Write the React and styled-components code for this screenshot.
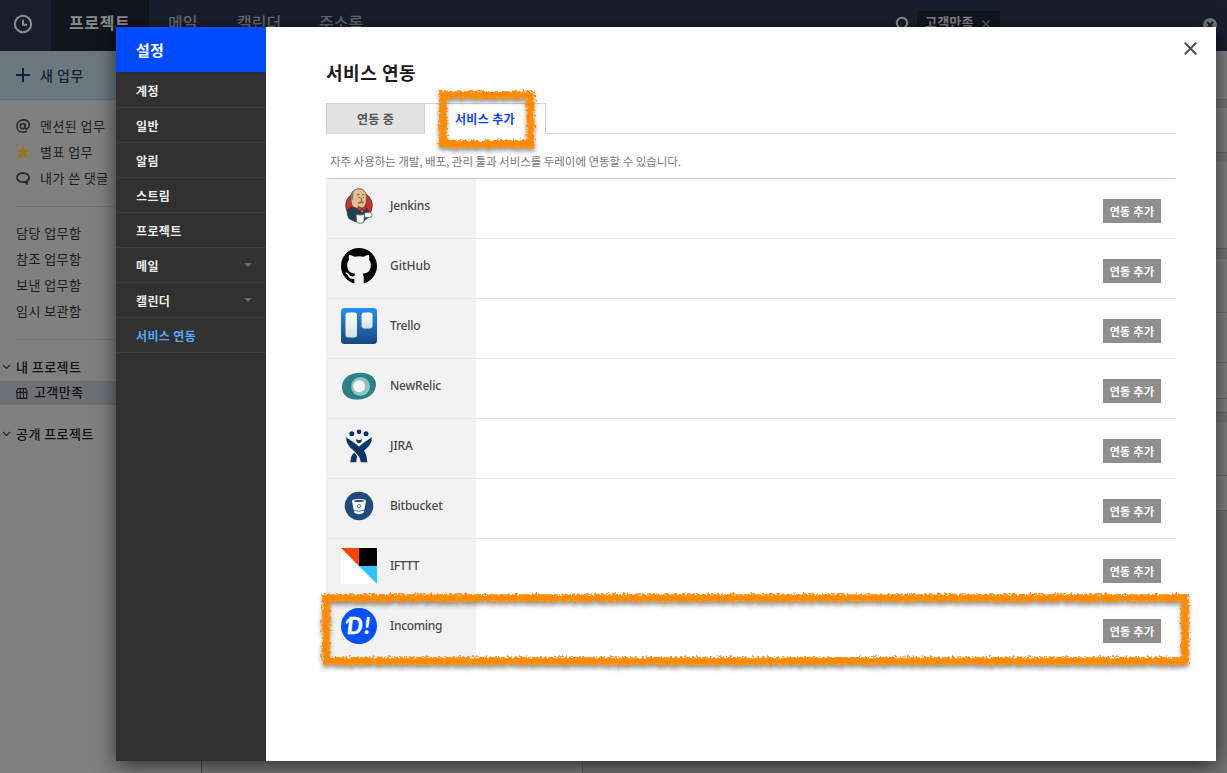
import React from "react";
import styled, { createGlobalStyle, css } from "styled-components";

const Global = createGlobalStyle`
  * { box-sizing: border-box; }
  html, body { margin: 0; padding: 0; }
  body {
    width: 1227px; height: 773px; overflow: hidden; background: #808080;
    font-family: "Noto Sans", "Noto Sans CJK KR", sans-serif;
    font-size: 13px; line-height: 1;
  }
  button { font-family: inherit; }
  svg { display: block; flex: none; }
`;

const kr = css`font-family: "Noto Sans CJK KR", sans-serif;`;

const Page = styled.div`
  position: relative; width: 1227px; height: 773px; overflow: hidden;
  display: flex; flex-direction: column; ${kr}
`;
const TopBar = styled.header`
  height: 51px; flex: none; display: flex; background: #181f2c; color: #6b6e74;
`;
const HistoryButton = styled.div`
  width: 51px; height: 51px; display: flex; align-items: center; padding: 0 0 4px 13px;
  color: #8d8d8d; background: #181f2c;
`;
const NavTab = styled.div`
  height: 51px; padding-top: 14px; line-height: 16px; font-size: 16px;
  font-weight: ${(p) => (p.$active ? 700 : 500)};
  letter-spacing: ${(p) => (p.$active ? "0.6px" : "0")};
  color: ${(p) => (p.$active ? "#8b8b8b" : "#65686e")};
  background: ${(p) => (p.$active ? "#11151e" : "transparent")};
  width: ${(p) => p.$w}px; padding-left: ${(p) => p.$pad}px;
`;
const SearchArea = styled.div`
  flex: 1; display: flex; align-items: flex-start; padding: 11px 10px 0 0;
`;
const SearchIcon = styled.div`margin: 5px 8px 0 500px; color: #8d8d8d;`;
const SearchTag = styled.div`
  width: 83px; height: 30px; background: #11151e; color: #818181; padding: 4px 0 0 8px;
  display: flex; gap: 8px; font-size: 13px; line-height: 14px; font-weight: 700;
  letter-spacing: 0.2px;
  svg { margin-top: 5px; color: #5c5f65; }
`;
const ClearIcon = styled.div`margin: 7px 0 0 auto; color: #777;`;

const Body = styled.div`flex: 1; display: flex; min-height: 0;`;
const Side = styled.aside`
  width: 202px; flex: none; background: #808080; border-right: 1px solid #4d4d4d; color: #1c1c1c;
`;
const NewTask = styled.div`
  height: 49px; background: #6c787f; border-bottom: 1px solid #5f6f7a; color: #172235;
  display: flex; align-items: center; gap: 10px; padding: 0 0 0 16px;
  font-size: 14px; font-weight: 500; letter-spacing: 0.5px;
`;
const SideGroup = styled.div`
  margin: 0 0 0 16px; padding: 13px 0 15px;
  border-bottom: 1px solid #727272;
`;
const SideLink = styled.div`
  height: 26px; display: flex; align-items: center; gap: 10px; padding-bottom: 1px;
  font-size: 13px; letter-spacing: 0.45px;
`;
const ProjectHead = styled.div`
  height: 26px; display: flex; align-items: center; gap: 5px; padding-left: 2px;
  font-size: 13px; font-weight: 500; letter-spacing: 0.45px; color: #111;
  margin-top: ${(p) => p.$mt}px;
  svg { margin-top: 2px; }
`;
const ProjectItem = styled.div`
  height: 24px; margin-top: 2px; background: #6e7076; display: flex; align-items: center; gap: 6px;
  padding: 0 0 3px 16px; font-size: 13px; font-weight: 500; letter-spacing: 0.4px; color: #111;
  svg { margin-top: 3px; }
`;
const ListPane = styled.div`width: 381px; flex: none; background: #7b7b7b; border-right: 1px solid #626262;`;
const DetailPane = styled.div`flex: 1; background: #737373; display: flex; flex-direction: column;`;
const Card = styled.div`
  height: ${(p) => p.$h}px; margin-bottom: ${(p) => p.$gap || 0}px; background: #808080;
  border-bottom: 1px solid #6a6a6a; flex: none;
`;

const Modal = styled.section`
  position: absolute; left: 116px; top: 27px; width: 1100px; height: 734px;
  display: flex; background: #fff; box-shadow: 0 5px 20px rgba(0, 0, 0, 0.62);
`;
const Menu = styled.nav`width: 150px; flex: none; background: #313131;`;
const MenuTitle = styled.h1`
  margin: 0; height: 46px; padding: 0 0 0 20px; background: #004bff; color: #fff;
  border-bottom: 1px solid #232d4a; display: flex; align-items: center;
  font-size: 15px; font-weight: 700; letter-spacing: 0.3px;
`;
const MenuItem = styled.div`
  height: 35px; padding: 2px 14px 0 20px; border-bottom: 1px solid #3c3c3c;
  display: flex; align-items: center; justify-content: space-between;
  font-size: 12px; font-weight: 700; letter-spacing: 0.35px;
  color: ${(p) => (p.$active ? "#5aa4f5" : "#ededed")};
`;
const Arrow = styled.i`
  border: 4px solid transparent; border-top-color: #686868; border-bottom: 0; margin-bottom: 2px;
`;
const Content = styled.main`flex: 1; padding: 0 40px 0 60px; display: flex; flex-direction: column;`;
const TitleRow = styled.div`
  height: 76px; flex: none; display: flex; justify-content: space-between;
  margin-right: -21px;
`;
const Title = styled.h2`
  margin: 0; padding-top: 35px; font-size: 18px; line-height: 20px; font-weight: 700;
  letter-spacing: 0.55px; color: #1b1b1b;
`;
const Close = styled.button`
  border: 0; background: none; padding: 12px 0 0; height: 30px; color: #4b4b4b;
`;
const Tabs = styled.div`height: 31px; flex: none; display: flex;`;
const Tab = styled.div`
  width: ${(p) => p.$w}px; display: flex; align-items: center; justify-content: center;
  border: 1px solid #d2d2d2; font-size: 12px; font-weight: 700; letter-spacing: 0.35px;
  ${(p) => p.$active
    ? css`background: #fff; color: #0a43ff; border-left: 0; border-bottom: 0;`
    : css`background: #e2e2e2; color: #555; border-bottom-color: #e2e2e2;`}
`;
const TabFill = styled.div`flex: 1; border-bottom: 1px solid #d2d2d2;`;
const Hint = styled.p`
  margin: 0; height: 44px; flex: none; padding: 20px 0 0 4px; font-size: 11.5px; line-height: 14px; color: #777;
  letter-spacing: -0.04px;
`;
const Table = styled.div`border-top: 1px solid #d5c1d8;`;
const Row = styled.div`
  height: 60px; display: flex; border-bottom: 1px solid #e6e6e6;
`;
const Service = styled.div`
  width: 150px; background: #f2f2f2; padding: 9px 0 0 15px; display: flex; gap: 13px;
`;
const ServiceName = styled.div`
  padding-top: 11px; font-family: "Noto Sans", sans-serif; font-size: 12px; line-height: 14px;
  font-weight: 500; color: #484848; letter-spacing: ${(p) => p.$track}px;
`;
const AddButton = styled.button`
  margin: 20px 15px 0 auto; width: 58px; height: 24px; border: 0; padding: 0 0 1px;
  background: #8e8e8e; color: #fff; font-size: 11px; font-weight: 700; letter-spacing: 0.35px;
`;
const Overlay = styled.svg`position: absolute; left: 0; top: 0; pointer-events: none;`;

const Cross = ({ s = 12, w = 2 }) => (
  <svg width={s} height={s} viewBox="0 0 12 12"><path d="M.7.7l10.6 10.6M11.3.7L.7 11.3" stroke="currentColor" strokeWidth={w} /></svg>
);
const Clock = () => (
  <svg width="20" height="20" viewBox="0 0 20 20" fill="none" stroke="currentColor" strokeWidth="2">
    <circle cx="10" cy="10" r="8.2" /><path d="M10 5.8v5h4" />
  </svg>
);
const Plus = () => <svg width="14" height="14"><path d="M7 0v14M0 7h14" stroke="currentColor" strokeWidth="2" /></svg>;
const At = () => (
  <svg width="14" height="14" viewBox="0 0 14 14" fill="none" stroke="#2c2c2c" strokeWidth="1.6">
    <circle cx="6.7" cy="7.2" r="2.4" /><path d="M9.4 4.5L9 8.2c0 1.8 1.1 1.8 1.8 1.5 1.2-.5 2.5-1.7 2.4-3.8C13 2.800 10.500.900 7.300.900 3.600.900.900 3.700.900 7.200c0 3.800 2.800 6 6.100 6 1.500 0 2.900-.300 4-.900" />
  </svg>
);
const Star = () => (
  <svg width="14" height="14" viewBox="0 0 14 14"><path d="M7 0l2.200 4.800 4.800.3-3.700 3.300 1.300 5.300L7 11l-4.600 2.700 1.300-5.300L0 5.100l4.800-.3z" fill="#927625" /></svg>
);
const Bubble = () => (
  <svg width="14" height="14" viewBox="0 0 14 14" fill="none" stroke="#2c2c2c" strokeWidth="1.9">
    <path d="M7 2C3.500 2 1 4 1 6.500S3.500 11 7 11c.8 0 1.400-.1 2-.2l2 1.900.1-2.800c1.300-.8 2-2 2-3.400C13 4 10.500 2 7 2z" />
  </svg>
);
const Chevron = () => <svg width="9" height="6" viewBox="0 0 9 6"><path d="M1 1l3.500 3.500L8 1" fill="none" stroke="#222" strokeWidth="1.1" /></svg>;
const Board = () => (
  <svg width="12" height="11" viewBox="0 0 12 11" fill="none" stroke="#1b1b1b">
    <path d="M2 .6h7.500l1.700 3v.8H.4v-.8zM1 4v6.400h9.700V4M4.400.6L4.200 4.500v6M7.300.6l.2 3.900v6" strokeWidth="1.1" />
  </svg>
);

const Jenkins = () => (
  <svg width="36" height="36" viewBox="0 0 36 36">
    <ellipse cx="18" cy="17.500" rx="13.300" ry="13.500" fill="#ca3134" stroke="#4e2a2c" strokeWidth=".8" />
    <path d="M8.500 31C5.500 27 5 21.500 10 19.500l5-1.500 8 1 4 3 1 7-6 4.500h-8z" fill="#23404f" stroke="#1d2a31" strokeWidth=".7" />
    <path d="M11.500 18.500c-1-2.500-1.800-5.500-1.800-8.500C10 4 13.500.8 18 .8s7.500 3.200 7.500 8.700c0 4.500-.5 8-3 10.500-1.800 1.500-4.500 1.500-6.500.5z" fill="#e4bd94" stroke="#53443a" strokeWidth=".8" />
    <path d="M9.800 11c-.8-4 .4-7 3-8.800-.6 3-.7 5-.6 7.800l-1 2.800z" fill="#777b78" />
    <path d="M16 6.800l2.500-.5M21.200 6.800l2 .1M17 9.500h1.500M22 9.500h1M20 9.500l1 4-1.500.3" stroke="#63503f" strokeWidth=".9" fill="none" />
    <path d="M17 15c2-.8 3.800-.8 5.500-.2" stroke="#8f6a55" strokeWidth="1.700" />
    <path d="M17 18.200l4 1.700 4.200-2-.4 4.800-3.800-1.700-4 2z" fill="#dc2933" stroke="#811c24" strokeWidth=".5" />
    <path d="M19 22.500l2 2 2-2z" fill="#8aa0b5" />
    <rect x="23" y="24.500" width="8" height="5" rx="2.300" fill="#eee" stroke="#666" strokeWidth=".8" />
    <path d="M15 26.500h8.500l-.7 8q-3.500 1.600-7 0z" fill="#fff" stroke="#555" strokeWidth=".8" />
    <path d="M15 26.500q4.200 1.300 8.500 0" fill="none" stroke="#555" strokeWidth=".8" />
  </svg>
);
const Github = () => (
  <svg width="36" height="36">
    <path d="M13.300 35.400C5.600 33.300 0 26.300 0 18 0 8 8 0 18 0s18 8 18 18c0 8.300-5.600 15.300-13.300 17.400v-6.100c0-1.700-.5-2.900-1.300-3.600 4.900-.5 8.400-2.400 8.400-9 0-2.100-.7-3.600-1.800-4.900.2-.8.700-2.600-.2-4.700-1.700-.4-4.300 1.100-5.100 1.700-3-.8-6.400-.8-9.400 0-.8-.6-3.400-2.100-5.100-1.700-.9 2.100-.4 3.900-.2 4.700-1.100 1.300-1.800 2.800-1.800 4.900 0 6.600 3.500 8.500 8.400 9-.7.600-1.100 1.300-1.300 2.300-1.800.8-4 .6-5.300-1.700C7.300 25 6 24.500 4.500 24.500c-.5.500 1.600 1.300 2.300 3.100 1.200 2.900 3.300 3.700 6.500 3.300z" />
  </svg>
);
const Trello = () => (
  <svg width="36" height="36">
    <defs>
      <linearGradient id="tb" x1="0" y1="0" x2="0" y2="1"><stop stopColor="#2590f2" /><stop offset="1" stopColor="#18457f" /></linearGradient>
      <linearGradient id="tw" x1="0" y1="0" x2="0" y2="1"><stop stopColor="#fff" /><stop offset="1" stopColor="#dcdde2" /></linearGradient>
    </defs>
    <rect width="36" height="36" rx="3.500" fill="url(#tb)" />
    <rect x="4.500" y="4.500" width="11.500" height="25" rx="3" fill="url(#tw)" />
    <rect x="20.500" y="4.500" width="11" height="16" rx="3" fill="url(#tw)" />
  </svg>
);
const NewRelic = () => (
  <svg width="36" height="36">
    <path d="M1 19.500C1 10.500 8 4.800 20 4.800c9 0 15 5 15 11.700C35 25 27.500 31.300 17 31.600 7.500 32 1 27 1 19.500z" fill="#2c8188" />
    <circle cx="19.500" cy="18.500" r="9.400" fill="#8cc4c1" /><circle cx="18.200" cy="18.200" r="6" fill="#f4f6f6" />
  </svg>
);
const Jira = () => (
  <svg width="36" height="36" fill="#0b3363">
    <circle cx="10.800" cy="5.700" r="2.500" /><circle cx="18" cy="3.700" r="2.300" /><circle cx="25" cy="5.700" r="2.500" />
    <path d="M15 11.300l3 1 3-1q0 3-3 4.200-3-1.200-3-4.200z" />
    <path d="M5.400 9C7.500 11.800 11 12.200 18 18.800 25 12.200 28.500 11.800 30.600 9c.6 5.300-1.800 9-7.600 13.600 1.800 2.800 2.900 6 3.300 11.600h-6.500c-.7-5-3-7.600-7-11.400C7.500 18 4.800 14.500 5.400 9z" />
    <path d="M13.200 24.600l3 3.600c-.5 1.700-.8 3.300-.8 6H9.400c.2-4 1.200-7.200 3.800-9.600z" />
  </svg>
);
const Bitbucket = () => (
  <svg width="36" height="36">
    <circle cx="18" cy="18" r="14.300" fill="#20497c" />
    <path d="M11 13q0-2 7-2t7 2l-1.600 8.500q-5.400 2.500-10.800 0z" fill="#fff" />
    <ellipse cx="18" cy="12.900" rx="5" ry="1" fill="#20497c" />
    <circle cx="18" cy="18" r="1.600" fill="#fff" stroke="#5979a0" />
    <path d="M12.900 22.500q5 2.200 10.200 0l-.6 2.500q-4.500 2.300-9 0z" fill="#fff" />
  </svg>
);
const Ifttt = () => (
  <svg width="36" height="36">
    <path fill="#fff" d="M0 0h36v36H0z" /><path fill="#ff4307" d="M0 0h18v18z" />
    <path d="M18 0h18v18H18z" /><path fill="#2dc4ff" d="M18 18h18v18z" />
  </svg>
);
const Dooray = () => (
  <svg width="36" height="36">
    <circle cx="18" cy="18" r="18" fill="#0750ff" />
    <g fill="#fff" fontFamily="Lato, sans-serif" fontSize="22" fontStyle="italic">
      <text x="6" y="26" fontWeight="700" stroke="#fff" strokeWidth=".5">D</text>
      <text x="23" y="26" fontWeight="900" fontSize="23">!</text>
    </g>
    <path d="M5.800 14.500q1-3.300 5.500-3.400" fill="none" stroke="#fff" strokeWidth="2.300" strokeLinecap="round" />
  </svg>
);

const services = [
  ["Jenkins", <Jenkins />, -0.2], ["GitHub", <Github />, 0], ["Trello", <Trello />, -0.2],
  ["NewRelic", <NewRelic />, -0.2], ["JIRA", <Jira />, -0.1], ["Bitbucket", <Bitbucket />, -0.25],
  ["IFTTT", <Ifttt />, -0.45], ["Incoming", <Dooray />, -0.3],
];
const menu = ["계정", "일반", "알림", "스트림", "프로젝트", "메일", "캘린더", "서비스 연동"];

const Highlights = () => (
  <Overlay width="1227" height="773">
    <defs>
      <filter id="brush" filterUnits="userSpaceOnUse" x="300" y="70" width="910" height="620">
        <feTurbulence type="fractalNoise" baseFrequency="0.4" numOctaves="2" seed="4" result="n" />
        <feDisplacementMap in="SourceGraphic" in2="n" scale="7.5" xChannelSelector="R" yChannelSelector="G" result="d" />
        <feDropShadow in="d" dx="0" dy="3" stdDeviation="2" floodColor="#000" floodOpacity="0.42" />
      </filter>
    </defs>
    <g filter="url(#brush)" fill="none" stroke="#ff8c05" strokeWidth="7.600">
      <path d="M443 95H530.500V144H443z" />
      <path d="M326 598H1185V661H326z" />
    </g>
  </Overlay>
);

export default function App() {
  return (
    <Page>
      <Global />
      <TopBar>
        <HistoryButton><Clock /></HistoryButton>
        <NavTab $active $w={98} $pad={18}>프로젝트</NavTab>
        <NavTab $w={68} $pad={19}>메일</NavTab>
        <NavTab $w={83} $pad={20}>캘린더</NavTab>
        <NavTab $w={95} $pad={19}>주소록</NavTab>
        <SearchArea>
          <SearchIcon>
            <svg width="14" height="16" fill="none" stroke="currentColor" strokeWidth="2"><circle cx="7" cy="7" r="5.200" /><path d="M10 11l3 4" /></svg>
          </SearchIcon>
          <SearchTag>고객만족<Cross s={8} w={1.8} /></SearchTag>
          <ClearIcon>
            <svg width="14" height="14"><circle cx="7" cy="7" r="7" fill="currentColor" /><path d="M4 4l6 6M10 4l-6 6" stroke="#181f2c" strokeWidth="2" /></svg>
          </ClearIcon>
        </SearchArea>
      </TopBar>
      <Body>
        <Side>
          <NewTask><Plus />새 업무</NewTask>
          <SideGroup>
            <SideLink><At />멘션된 업무</SideLink>
            <SideLink><Star />별표 업무</SideLink>
            <SideLink><Bubble />내가 쓴 댓글</SideLink>
          </SideGroup>
          <SideGroup>
            <SideLink>담당 업무함</SideLink>
            <SideLink>참조 업무함</SideLink>
            <SideLink>보낸 업무함</SideLink>
            <SideLink>임시 보관함</SideLink>
          </SideGroup>
          <ProjectHead $mt={13}><Chevron />내 프로젝트</ProjectHead>
          <ProjectItem><Board />고객만족</ProjectItem>
          <ProjectHead $mt={15}><Chevron />공개 프로젝트</ProjectHead>
        </Side>
        <ListPane />
        <DetailPane>
          <Card $h={49} $gap={8} /><Card $h={45} $gap={9} /><Card $h={87} $gap={10} />
          <Card $h={54} /><Card $h={50} /><Card $h={36} /><Card $h={14} $gap={9} />
          <Card $h={54} /><Card $h={35} />
        </DetailPane>
      </Body>
      <Modal>
        <Menu>
          <MenuTitle>설정</MenuTitle>
          {menu.map((m, i) => (
            <MenuItem key={m} $active={i === 7}>{m}{(i === 5 || i === 6) && <Arrow />}</MenuItem>
          ))}
        </Menu>
        <Content>
          <TitleRow>
            <Title>서비스 연동</Title>
            <Close aria-label="닫기"><Cross s={13} w={1.8} /></Close>
          </TitleRow>
          <Tabs>
            <Tab $w={99}>연동 중</Tab>
            <Tab $w={121} $active>서비스 추가</Tab>
            <TabFill />
          </Tabs>
          <Hint>자주 사용하는 개발, 배포, 관리 툴과 서비스를 두레이에 연동할 수 있습니다.</Hint>
          <Table>
            {services.map(([name, icon, track]) => (
              <Row key={name}>
                <Service>{icon}<ServiceName $track={track}>{name}</ServiceName></Service>
                <AddButton>연동 추가</AddButton>
              </Row>
            ))}
          </Table>
        </Content>
      </Modal>
      <Highlights />
    </Page>
  );
}
